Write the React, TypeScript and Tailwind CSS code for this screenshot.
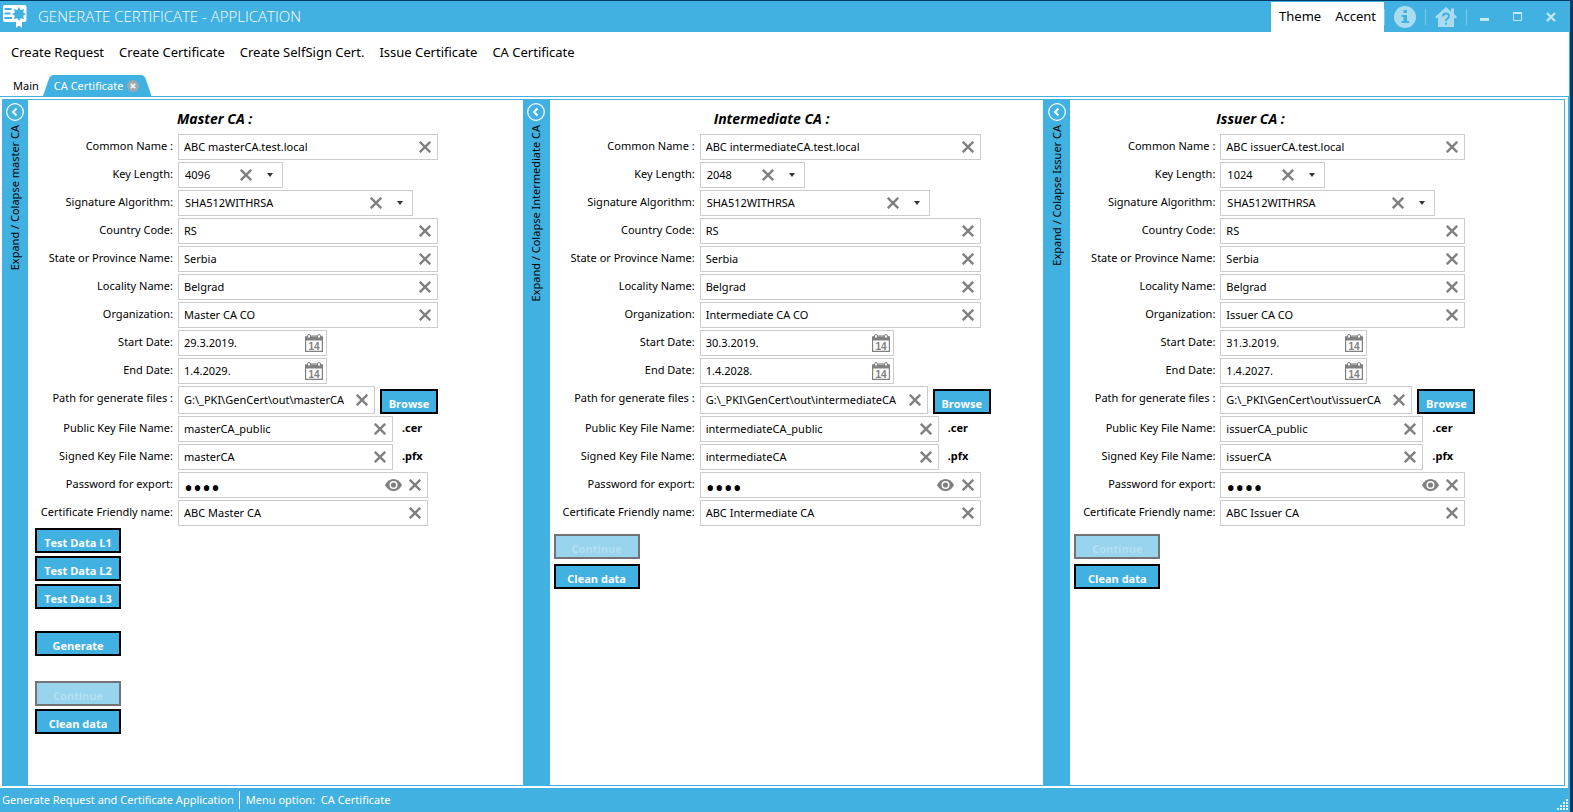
import { useState } from "react";
import type { ReactNode } from "react";

type Panel = {
  id: string;
  title: string;
  toggle: string;
  titlePad: string;
  barWidth: string;
  values: Record<string, string>;
  widths: Record<string, string>;
};

const PANELS: Panel[] = [
  {
    id: "master",
    title: "Master CA :",
    toggle: "Expand / Colapse master CA",
    titlePad: "pl-[149px]",
    barWidth: "w-[26px]",
    values: {
      cn: "ABC masterCA.test.local", key: "4096", org: "Master CA CO",
      start: "29.3.2019.", end: "1.4.2029.", path: "G:\\_PKI\\GenCert\\out\\masterCA",
      pub: "masterCA_public", signed: "masterCA", friendly: "ABC Master CA",
    },
    widths: { text: "w-[260px]", alg: "w-[235px]", date: "w-[149px]", path: "w-[197px]", file: "w-[215px]", pass: "w-[250px]" },
  },
  {
    id: "intermediate",
    title: "Intermediate CA :",
    toggle: "Expand / Colapse Intermediate CA",
    titlePad: "pl-[164px]",
    barWidth: "w-[27px]",
    values: {
      cn: "ABC intermediateCA.test.local", key: "2048", org: "Intermediate CA CO",
      start: "30.3.2019.", end: "1.4.2028.", path: "G:\\_PKI\\GenCert\\out\\intermediateCA",
      pub: "intermediateCA_public", signed: "intermediateCA", friendly: "ABC Intermediate CA",
    },
    widths: { text: "w-[281px]", alg: "w-[230px]", date: "w-[194px]", path: "w-[228px]", file: "w-[239px]", pass: "w-[281px]" },
  },
  {
    id: "issuer",
    title: "Issuer CA :",
    toggle: "Expand / Colapse Issuer CA",
    titlePad: "pl-[146px]",
    barWidth: "w-[27px]",
    values: {
      cn: "ABC issuerCA.test.local", key: "1024", org: "Issuer CA CO",
      start: "31.3.2019.", end: "1.4.2027.", path: "G:\\_PKI\\GenCert\\out\\issuerCA",
      pub: "issuerCA_public", signed: "issuerCA", friendly: "ABC Issuer CA",
    },
    widths: { text: "w-[245px]", alg: "w-[215px]", date: "w-[147px]", path: "w-[192px]", file: "w-[203px]", pass: "w-[245px]" },
  },
];

function ClearButton({ onClick }: { onClick: () => void }) {
  return (
    <button type="button" aria-label="Clear" onClick={onClick} className="w-6 h-full shrink-0 flex items-center justify-center">
      <svg width="12" height="12" viewBox="0 0 12 12" stroke="#808080" strokeWidth="2.4">
        <path d="M.8.8l10.400 10.400M11.200.8L.8 11.200" />
      </svg>
    </button>
  );
}

function Row({ id, label, tall, children }: { id: string; label: string; tall?: boolean; children: ReactNode }) {
  return (
    <div className={`flex ${tall ? "h-7" : "h-[26px]"}`}>
      <label htmlFor={id} className="w-[145px] mr-[5px] pt-1 text-right leading-4 whitespace-nowrap shrink-0">{label}</label>
      {children}
    </div>
  );
}

function TextBox({ id, value, width, type = "text", icon }: { id: string; value: string; width: string; type?: string; icon?: ReactNode }) {
  const [text, setText] = useState(value);
  return (
    <div className={`flex h-full shrink-0 border border-[#cccccc] bg-white ${width}`}>
      <input
        id={id}
        type={type}
        value={text}
        onChange={(e) => setText(e.target.value)}
        className={`min-w-0 flex-1 pl-[5px] bg-transparent outline-none ${type === "password" ? "pt-1 text-2xl leading-5" : ""}`}
      />
      {icon}
      <ClearButton onClick={() => setText("")} />
    </div>
  );
}

function ComboBox({ id, value, options, width }: { id: string; value: string; options: string[]; width: string }) {
  const [picked, setPicked] = useState(value);
  return (
    <div className={`flex items-center h-full shrink-0 border border-[#cccccc] bg-white ${width}`}>
      <select id={id} value={picked} onChange={(e) => setPicked(e.target.value)} className="appearance-none min-w-0 flex-1 h-full pl-1.5 bg-transparent outline-none">
        <option value=""></option>
        {options.map((o) => <option key={o}>{o}</option>)}
      </select>
      <ClearButton onClick={() => setPicked("")} />
      <span className="w-6 flex justify-center pointer-events-none">
        <svg width="6" height="4" viewBox="0 0 6 4" fill="#333333"><path d="M0 0h6L3 4z" /></svg>
      </span>
    </div>
  );
}

function DateBox({ id, value, width }: { id: string; value: string; width: string }) {
  const [text, setText] = useState(value);
  return (
    <div className={`flex items-center h-full shrink-0 border border-[#cccccc] bg-white ${width}`}>
      <input id={id} value={text} onChange={(e) => setText(e.target.value)} className="min-w-0 flex-1 pl-[5px] bg-transparent outline-none" />
      <button type="button" aria-label="Pick a date" className="mr-[3px] shrink-0">
        <svg width="18" height="18" viewBox="0 0 18 18">
          <path d="M.6 3h16.800v14.400H.6z" fill="none" stroke="#808080" strokeWidth="1.200" />
          <path d="M0 2.500h18V6.500H0z" fill="#808080" />
          <path d="M2.500 4V2a1.500 1.500 0 0 1 3 0v2zM12.500 4V2a1.500 1.500 0 0 1 3 0v2z" fill="#fff" stroke="#808080" />
          <path d="M6 1.500h6" stroke="#bbbbbb" />
          <text x="9" y="15.500" textAnchor="middle" fontSize="10" fontWeight="bold" fontFamily="Liberation Sans, sans-serif" fill="#808080">14</text>
        </svg>
      </button>
    </div>
  );
}

function ActionButton({ children, disabled, width = "w-[86px]" }: { children: ReactNode; disabled?: boolean; width?: string }) {
  return (
    <button
      type="button"
      disabled={disabled}
      className={`h-[25px] pt-1 shrink-0 border-2 font-['Open_Sans',sans-serif] font-bold leading-4 bg-[#41b1e1] border-black text-white disabled:bg-[#98d4ee] disabled:border-[#737373] disabled:text-[#b3dff2] ${width}`}
    >
      {children}
    </button>
  );
}

const Eye = (
  <button type="button" aria-label="Show password" className="w-5 shrink-0 flex items-center justify-center">
    <svg width="17" height="12" viewBox="0 0 17 12">
      <path d="M0 6C2 2 5 0 8.500 0S15 2 17 6c-2 4-5 6-8.500 6S2 10 0 6z" fill="#808080" />
      <circle cx="8.500" cy="6" r="3.300" fill="none" stroke="#fff" strokeWidth="1.500" />
    </svg>
  </button>
);

function CaPanel({ panel }: { panel: Panel }) {
  const { id, values: v, widths: w } = panel;
  const [open, setOpen] = useState(true);
  return (
    <section className="flex flex-1 min-w-0">
      <button type="button" onClick={() => setOpen(!open)} className={`shrink-0 bg-[#41b1e1] flex flex-col items-center pt-[3px] gap-1 ${panel.barWidth}`}>
        <svg width="18" height="18" viewBox="0 0 18 18" fill="none" stroke="#fff">
          <circle cx="9" cy="9" r="8.300" strokeWidth="1.200" />
          <path d="M10.500 5.500L7 9l3.500 3.500" strokeWidth="2" />
        </svg>
        <span className="[writing-mode:vertical-rl] rotate-180 whitespace-nowrap leading-4">{panel.toggle}</span>
      </button>
      {open && (
        <form className="flex-1 min-w-0" onSubmit={(e) => e.preventDefault()}>
          <h2 className={`pt-2.5 pb-1.5 text-sm leading-[18px] font-bold italic font-['Open_Sans',sans-serif] ${panel.titlePad}`}>{panel.title}</h2>
          <div className="flex flex-col gap-0.5">
            <Row id={`${id}-cn`} label="Common Name :"><TextBox id={`${id}-cn`} value={v.cn} width={w.text} /></Row>
            <Row id={`${id}-key`} label="Key Length:"><ComboBox id={`${id}-key`} value={v.key} options={["1024", "2048", "4096"]} width="w-[105px]" /></Row>
            <Row id={`${id}-alg`} label="Signature Algorithm:"><ComboBox id={`${id}-alg`} value="SHA512WITHRSA" options={["SHA256WITHRSA", "SHA512WITHRSA"]} width={w.alg} /></Row>
            <Row id={`${id}-cc`} label="Country Code:"><TextBox id={`${id}-cc`} value="RS" width={w.text} /></Row>
            <Row id={`${id}-st`} label="State or Province Name:"><TextBox id={`${id}-st`} value="Serbia" width={w.text} /></Row>
            <Row id={`${id}-loc`} label="Locality Name:"><TextBox id={`${id}-loc`} value="Belgrad" width={w.text} /></Row>
            <Row id={`${id}-org`} label="Organization:"><TextBox id={`${id}-org`} value={v.org} width={w.text} /></Row>
            <Row id={`${id}-start`} label="Start Date:"><DateBox id={`${id}-start`} value={v.start} width={w.date} /></Row>
            <Row id={`${id}-end`} label="End Date:"><DateBox id={`${id}-end`} value={v.end} width={w.date} /></Row>
            <Row id={`${id}-path`} label="Path for generate files :" tall>
              <TextBox id={`${id}-path`} value={v.path} width={w.path} />
              <div className="ml-[5px] self-end flex"><ActionButton width="w-[58px]">Browse</ActionButton></div>
            </Row>
            <Row id={`${id}-pub`} label="Public Key File Name:">
              <TextBox id={`${id}-pub`} value={v.pub} width={w.file} />
              <span className="ml-[9px] pt-1 leading-4 font-bold">.cer</span>
            </Row>
            <Row id={`${id}-signed`} label="Signed Key File Name:">
              <TextBox id={`${id}-signed`} value={v.signed} width={w.file} />
              <span className="ml-[9px] pt-1 leading-4 font-bold">.pfx</span>
            </Row>
            <Row id={`${id}-pass`} label="Password for export:"><TextBox id={`${id}-pass`} type="password" value="1234" width={w.pass} icon={Eye} /></Row>
            <Row id={`${id}-friendly`} label="Certificate Friendly name:"><TextBox id={`${id}-friendly`} value={v.friendly} width={w.pass} /></Row>
          </div>
          {id === "master" ? (
            <div className="flex flex-col items-start pl-[7px] pt-0.5">
              <div className="flex flex-col gap-[3px]">
                <ActionButton>Test Data L1</ActionButton>
                <ActionButton>Test Data L2</ActionButton>
                <ActionButton>Test Data L3</ActionButton>
              </div>
              <div className="flex pt-[22px] pb-[25px]"><ActionButton>Generate</ActionButton></div>
              <div className="flex flex-col gap-[3px]">
                <ActionButton disabled>Continue</ActionButton>
                <ActionButton>Clean data</ActionButton>
              </div>
            </div>
          ) : (
            <div className="flex flex-col items-start gap-[5px] pl-1 pt-2">
              <ActionButton disabled>Continue</ActionButton>
              <ActionButton>Clean data</ActionButton>
            </div>
          )}
        </form>
      )}
    </section>
  );
}

export default function App() {
  return (
    <div className="min-h-screen flex bg-[#003a66] pt-px pr-[3px] text-[11px] text-black font-['Noto_Sans',sans-serif]">
      <div className="flex-1 min-w-0 flex flex-col bg-white">
        {/* Title bar */}
        <header className="flex items-center h-[31px] bg-[#41b1e1] text-white">
          <svg width="24" height="23" viewBox="0 0 24 23" className="ml-[3px]">
            <path d="M2 0h19.500a2 2 0 0 1 2 2v13a2 2 0 0 1-2 2H19v6l-3-2.500-3 2.500v-6H2a2 2 0 0 1-2-2V2a2 2 0 0 1 2-2z" fill="#fff" />
            <path d="M1.500 4h7M1.500 8.500h6M1.500 13h7.500" stroke="#41b1e1" strokeWidth="1.800" />
            <path d="M16 2l1.700 2.900 3.300-.8-.8 3.300L23 9l-2.800 1.700.8 3.300-3.300-.8L16 16l-1.700-2.800-3.300.8.8-3.300L9 9l2.800-1.600-.8-3.300 3.300.8z" fill="#41b1e1" />
          </svg>
          <h1 className="ml-[11px] text-[15px] font-light font-['Open_Sans',sans-serif]">GENERATE CERTIFICATE - APPLICATION</h1>
          <nav className="ml-auto self-end h-[30px] flex items-center gap-3.5 px-2 bg-white text-black text-[13px]">
            <button type="button">Theme</button>
            <button type="button">Accent</button>
          </nav>
          <div className="flex items-center text-[#a9dcf1]">
            <button type="button" aria-label="About" className="w-[41px] h-4 border-l border-[#7ccaeb] flex items-center justify-center">
              <svg width="22" height="22" viewBox="0 0 22 22" className="shrink-0">
                <circle cx="11" cy="11" r="11" fill="currentColor" />
                <path d="M9.500 4h3.500v3H9.500zM7.500 9H13v6h2v2H7.500v-2h2v-4h-2z" fill="#41b1e1" />
              </svg>
            </button>
            <button type="button" aria-label="Help" className="w-[41px] h-4 border-l border-[#7ccaeb] flex items-center justify-center">
              <svg width="22" height="20" viewBox="0 0 22 20" className="shrink-0">
                <path d="M11 0l5 4.500V1.500h3v5.500l3 3-1.500 1.500L19 10.500V20H3v-9.500l-1.500 1L0 10z" fill="currentColor" />
                <path d="M8 9.500c0-4 6-4 6-.5 0 2.500-3 2.500-3 5M11 15.500v2" fill="none" stroke="#41b1e1" strokeWidth="2" />
              </svg>
            </button>
            <button type="button" aria-label="Minimize" className="w-9 h-4 border-l border-[#7ccaeb] flex items-center justify-center">
              <svg width="9" height="9" viewBox="0 0 9 9"><path d="M0 6h9v3H0z" fill="#c6e8f6" /></svg>
            </button>
            <button type="button" aria-label="Maximize" className="w-[30px] flex justify-center">
              <svg width="9" height="9" viewBox="0 0 9 9"><path d="M.5 1v7.500h8V1" fill="none" stroke="#c6e8f6" /><path d="M0 0h9v2H0z" fill="#c6e8f6" /></svg>
            </button>
            <button type="button" aria-label="Close" className="w-[38px] flex justify-center">
              <svg width="10" height="10" viewBox="0 0 10 10"><path d="M1 1l8 8M9 1L1 9" stroke="#c6e8f6" strokeWidth="2.200" /></svg>
            </button>
          </div>
        </header>

        {/* Menu */}
        <nav className="flex gap-[15px] px-[11px] pt-2.5 h-10 text-[13px] leading-5 border-r border-[#41b1e1]">
          {["Create Request", "Create Certificate", "Create SelfSign Cert.", "Issue Certificate", "CA Certificate"].map((item) => (
            <a key={item} href="#">{item}</a>
          ))}
        </nav>

        {/* Tabs */}
        <div className="flex items-end h-[25px] pl-[13px] border-b border-r border-[#41b1e1]">
          <button type="button" className="h-[21px] leading-5">Main</button>
          <div className="relative h-[21px] ml-1 pl-[11px] pr-3 flex items-center gap-1 text-white">
            <svg viewBox="0 0 111 21" preserveAspectRatio="none" className="absolute inset-0 w-full h-full" fill="#41b1e1">
              <path d="M0 21L6 4q1.500-4 5-4h89q3.500 0 5 4l6 17z" />
            </svg>
            <button type="button" className="relative leading-5">CA Certificate</button>
            <button type="button" aria-label="Close tab" className="relative">
              <svg width="12" height="12" viewBox="0 0 12 12"><circle cx="6" cy="6" r="6" fill="#9aaab2" /><path d="M3.700 3.700l4.600 4.600M8.300 3.700L3.700 8.300" stroke="#fff" strokeWidth="1.400" /></svg>
            </button>
          </div>
        </div>

        {/* CA panels */}
        <main className="flex-1 flex pl-0.5 pr-[3px] pt-0.5 pb-0.5 border-r-2 border-[#41b1e1]">
          <div className="flex-1 flex border-t border-r border-b border-[#41b1e1]">
            {PANELS.map((p) => <CaPanel key={p.id} panel={p} />)}
          </div>
        </main>

        {/* Status bar */}
        <footer className="flex items-center h-6 pl-0.5 bg-[#41b1e1] text-white">
          <span className="pr-[5px]">Generate Request and Certificate Application</span>
          <span className="pl-1.5 border-l border-white h-[18px] leading-[18px]">Menu option:&nbsp; CA Certificate</span>
          <svg width="11" height="11" viewBox="0 0 11 11" fill="#e4f3fa" className="ml-auto mr-0.5 self-end mb-0.5">
            <path d="M9 0h2v2H9zM6 3h2v2H6zM9 3h2v2H9zM3 6h2v2H3zM6 6h2v2H6zM9 6h2v2H9zM0 9h2v2H0zM3 9h2v2H3zM6 9h2v2H6zM9 9h2v2H9z" />
          </svg>
        </footer>
      </div>
    </div>
  );
}
